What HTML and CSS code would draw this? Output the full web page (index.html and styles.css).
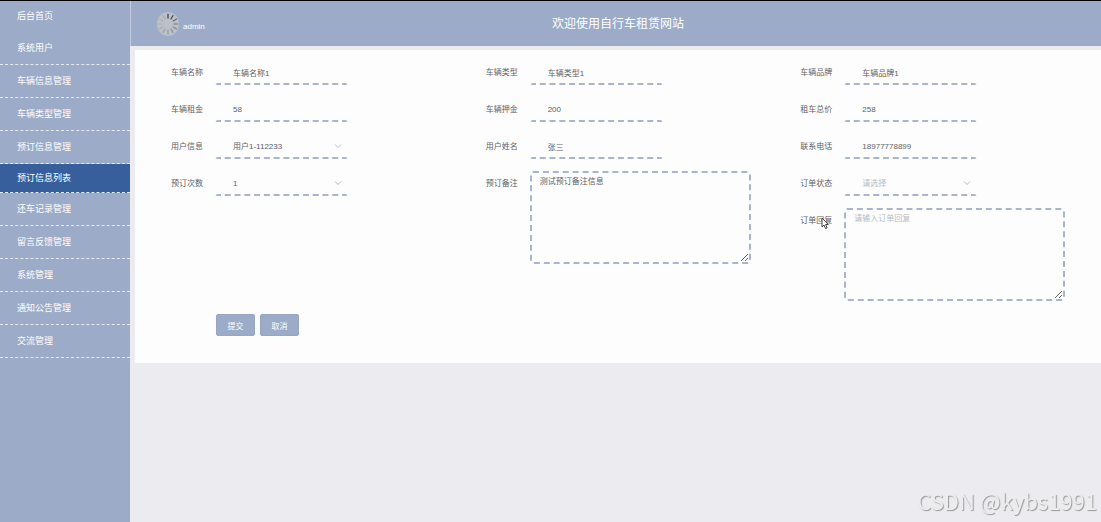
FILE: index.html
```html
<!DOCTYPE html>
<html lang="zh-CN">
<head>
    <meta charset="UTF-8">
    <meta name="viewport" content="width=device-width, initial-scale=1.0">
    <title>自行车租赁网站</title>
    <link rel="stylesheet" href="styles.css">
</head>
<body>
    <nav class="sidebar">
        <a class="menu-item home" href="#">后台首页</a>
        <a class="menu-item" href="#">系统用户</a>
        <a class="menu-item" href="#">车辆信息管理</a>
        <a class="menu-item" href="#">车辆类型管理</a>
        <a class="menu-item" href="#">预订信息管理</a>
        <a class="menu-item active" href="#">预订信息列表</a>
        <a class="menu-item" href="#">还车记录管理</a>
        <a class="menu-item" href="#">留言反馈管理</a>
        <a class="menu-item" href="#">系统管理</a>
        <a class="menu-item" href="#">通知公告管理</a>
        <a class="menu-item" href="#">交流管理</a>
    </nav>

    <div class="main">
        <header class="header">
            <div class="user">
                <svg class="avatar" viewBox="0 0 22 24" aria-hidden="true">
                    <ellipse cx="11" cy="12" rx="11" ry="12" fill="#bcc1c9"/>
                    <g stroke-width="1.2" stroke-linecap="round">
                        <path d="M11 2v4" stroke="#33373f"/>
                        <path d="M16 3.5l-2 3.4" stroke="#4b4f57"/>
                        <path d="M19.6 7l-3.4 2" stroke="#666a72"/>
                        <path d="M21 12h-4" stroke="#747981"/>
                        <path d="M19.6 17l-3.4-2" stroke="#858a92"/>
                        <path d="M16 20.5l-2-3.4" stroke="#8d929a"/>
                        <path d="M11 22v-4" stroke="#92979f"/>
                        <path d="M6 20.5l2-3.4" stroke="#9ca1a9"/>
                        <path d="M2.4 17l3.4-2" stroke="#a6abb3"/>
                        <path d="M1 12h4" stroke="#acb1b9"/>
                        <path d="M2.4 7l3.4 2" stroke="#abb0b8"/>
                        <path d="M6 3.5l2 3.4" stroke="#a5aab2"/>
                    </g>
                </svg>
                <span class="user-name">admin</span>
            </div>
            <h1 class="title">欢迎使用自行车租赁网站</h1>
        </header>

        <form class="panel">
            <div class="columns">
                <div class="column">
                    <div class="field">
                        <label for="bikeName">车辆名称</label>
                        <input type="text" id="bikeName" value="车辆名称1">
                    </div>
                    <div class="field">
                        <label for="rent">车辆租金</label>
                        <input type="text" id="rent" value="58">
                    </div>
                    <div class="field">
                        <label for="userInfo">用户信息</label>
                        <div class="select">
                            <select id="userInfo">
                                <option>用户1-112233</option>
                            </select>
                            <svg class="arrow" viewBox="0 0 8 8" aria-hidden="true"><path d="M1 2.5l3 3 3-3"/></svg>
                        </div>
                    </div>
                    <div class="field">
                        <label for="times">预订次数</label>
                        <div class="select">
                            <select id="times">
                                <option>1</option>
                            </select>
                            <svg class="arrow" viewBox="0 0 8 8" aria-hidden="true"><path d="M1 2.5l3 3 3-3"/></svg>
                        </div>
                    </div>
                </div>

                <div class="column">
                    <div class="field">
                        <label for="bikeType">车辆类型</label>
                        <input type="text" id="bikeType" value="车辆类型1">
                    </div>
                    <div class="field">
                        <label for="deposit">车辆押金</label>
                        <input type="text" id="deposit" value="200">
                    </div>
                    <div class="field">
                        <label for="userName">用户姓名</label>
                        <input type="text" id="userName" value="张三">
                    </div>
                    <div class="field">
                        <label for="remark">预订备注</label>
                        <textarea id="remark">测试预订备注信息</textarea>
                    </div>
                </div>

                <div class="column">
                    <div class="field">
                        <label for="brand">车辆品牌</label>
                        <input type="text" id="brand" value="车辆品牌1">
                    </div>
                    <div class="field">
                        <label for="total">租车总价</label>
                        <input type="text" id="total" value="258">
                    </div>
                    <div class="field">
                        <label for="phone">联系电话</label>
                        <input type="text" id="phone" value="18977778899">
                    </div>
                    <div class="field">
                        <label for="status">订单状态</label>
                        <div class="select">
                            <select id="status" class="empty">
                                <option>请选择</option>
                            </select>
                            <svg class="arrow" viewBox="0 0 8 8" aria-hidden="true"><path d="M1 2.5l3 3 3-3"/></svg>
                        </div>
                    </div>
                    <div class="field">
                        <label for="reply">订单回复
                            <svg class="cursor" viewBox="0 0 8 13" aria-hidden="true"><path d="M1 1v9l2-2 1.600 3.600 1.500-.7L4.600 7.500H7.300z"/></svg>
                        </label>
                        <textarea id="reply" placeholder="请输入订单回复"></textarea>
                    </div>
                </div>
            </div>

            <div class="buttons">
                <button type="submit">提交</button>
                <button type="button">取消</button>
            </div>
        </form>
    </div>

    <div class="watermark">CSDN @kybs1991</div>
</body>
</html>
```
FILE: styles.css
```css
* {
    box-sizing: border-box;
}

body {
    display: flex;
    min-height: 100vh;
    margin: 0;
    border-top: 1px solid #000;
    background-color: #ebebf0;
    color: #606266;
    font-family: "Liberation Sans", "Noto Sans CJK SC", sans-serif;
    font-size: 8px;
}

input, select, textarea, button {
    font-family: inherit;
    font-size: 8px;
    color: inherit;
}

/* sidebar */
.sidebar {
    flex: none;
    width: 130px;
    background-color: #9cabc7;
}
.menu-item {
    display: block;
    height: 33px;
    padding-left: 17px;
    border-bottom: 1px dashed #e6eaf2;
    color: #fff;
    font-size: 9px;
    line-height: 33px;
    text-decoration: none;
}
.menu-item.home {
    height: 31px;
    border-bottom: none;
    line-height: 31px;
}
.menu-item.active {
    height: 29px;
    background-color: #365f9b;
    line-height: 29px;
}

/* header */
.main {
    flex: 1;
    min-width: 0;
}
.header {
    display: grid;
    grid-template-columns: 1fr auto 1fr;
    align-items: center;
    height: 45px;
    padding: 0 22px 0 26px;
    border-left: 1px solid #c3cbdf;
    background-color: #9cabc7;
    color: #fff;
}
.user {
    display: flex;
    align-items: center;
    gap: 4px;
}
.avatar {
    width: 22px;
    height: 24px;
}
.user-name {
    padding-top: 5px;
}
.title {
    margin: 0;
    padding-bottom: 2px;
    font-size: 12px;
    font-weight: normal;
}

/* form */
.panel {
    margin: 4px 0 0 5px;
    padding: 9px 11px 27px;
    background-color: #fdfdfd;
}
.columns {
    display: grid;
    grid-template-columns: repeat(3, 1fr);
}
.column {
    display: flex;
    flex-direction: column;
    gap: 9px;
}
.field {
    display: flex;
    align-items: flex-start;
}
.field label {
    position: relative;
    flex: none;
    width: 69px;
    padding-right: 12px;
    line-height: 28px;
    text-align: right;
}
.field input, .field select {
    width: 133px;
    height: 26px;
    padding: 0 16px;
    border: 2px dashed transparent;
    border-bottom-color: #a9b4d0;
    border-radius: 2px;
    background: none;
    outline: none;
}
.select {
    position: relative;
}
.field select {
    display: block;
    appearance: none;
}
.field select.empty, textarea::placeholder {
    color: #b8bbc3;
}
.arrow {
    position: absolute;
    top: 9px;
    right: 6px;
    width: 8px;
    height: 8px;
    fill: none;
    stroke: #b8bbc3;
    pointer-events: none;
}
.field textarea {
    width: 221px;
    height: 93px;
    margin-top: 1px;
    padding: 2px 8px;
    border: 2px dashed #a9b4d0;
    border-radius: 3px;
    background: none;
    line-height: 14px;
    outline: none;
    resize: both;
}
.cursor {
    position: absolute;
    top: 10px;
    right: 15px;
    width: 8px;
    height: 13px;
    fill: #fff;
    stroke: #444;
}
.buttons {
    display: flex;
    gap: 5px;
    margin-top: 13px;
    padding-left: 70px;
}
.buttons button {
    width: 39px;
    height: 22px;
    padding: 0;
    border: 1px solid #97a6c4;
    border-radius: 2px;
    background-color: #9cabc7;
    color: #fff;
    cursor: pointer;
}

.watermark {
    position: fixed;
    right: 4px;
    bottom: 6px;
    color: #ededf0;
    font-family: "Noto Sans CJK SC", sans-serif;
    font-size: 22px;
    line-height: 32px;
    text-shadow: 1px 1px 1px #999;
}
```
